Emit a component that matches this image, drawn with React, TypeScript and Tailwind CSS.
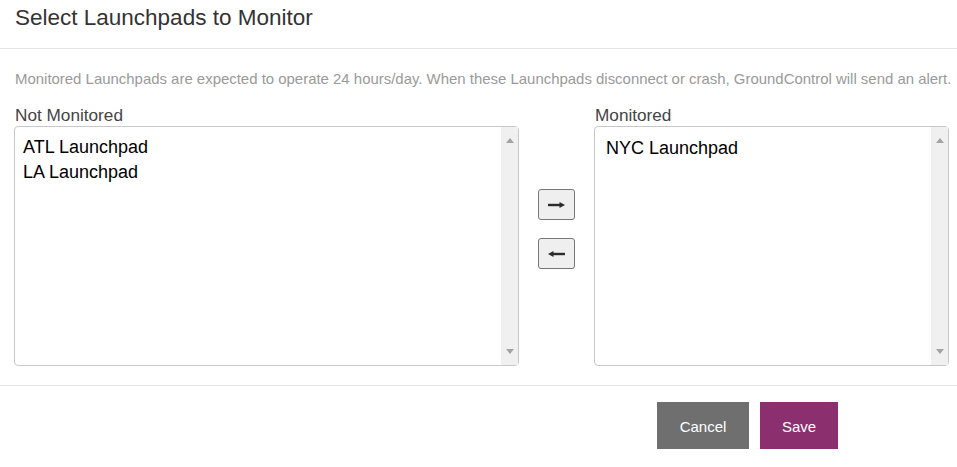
import React from "react";

const notMonitored = ["ATL Launchpad", "LA Launchpad"];
const monitored = ["NYC Launchpad"];

function FakeScrollbar() {
  return (
    <div className="flex w-[17px] flex-col items-center justify-between bg-[#f0f0f0] py-[11px]">
      <span className="h-0 w-0 border-x-[4.5px] border-b-[5px] border-x-transparent border-b-[#a3a3a3]" />
      <span className="h-0 w-0 border-x-[4.5px] border-t-[5px] border-x-transparent border-t-[#a3a3a3]" />
    </div>
  );
}

function ListBox({ items, width, padded }: { items: string[]; width: string; padded?: boolean }) {
  return (
    <div className={`flex h-[240px] ${width} rounded-[4px] border border-[#c8c8c8]`}>
      <ul
        className={`flex-1 text-[18px] leading-[25px] text-black ${
          padded ? "pl-[11px] pt-[9px]" : "pl-[8px] pt-[8px]"
        }`}
      >
        {items.map((it) => (
          <li key={it}>{it}</li>
        ))}
      </ul>
      <FakeScrollbar />
    </div>
  );
}

function ArrowButton({ dir }: { dir: "right" | "left" }) {
  return (
    <button className="flex h-[31px] w-[37px] items-center justify-center rounded-[3px] border border-[#767676] bg-[#efefef]">
      <svg width="17" height="8" viewBox="0 0 17 8">
        {dir === "right" ? (
          <>
            <rect x="0" y="2.8" width="12" height="2.4" fill="#2b2b2b" />
            <path d="M11.5 1 L17 4 L11.5 7 Z" fill="#2b2b2b" />
          </>
        ) : (
          <>
            <rect x="5" y="2.8" width="12" height="2.4" fill="#2b2b2b" />
            <path d="M5.5 1 L0 4 L5.5 7 Z" fill="#2b2b2b" />
          </>
        )}
      </svg>
    </button>
  );
}

export default function App() {
  return (
    <div className="h-[467px] w-[957px] overflow-hidden bg-white font-['Liberation_Sans',Arial,sans-serif]">
      <div className="flex h-[49px] items-start border-b border-[#e5e5e5] px-[15px] pt-[5px]">
        <h4 className="text-[22.5px] leading-[26px] text-[#333]">Select Launchpads to Monitor</h4>
      </div>

      <div className="px-[15px] pt-[21px]">
        <p className="whitespace-nowrap text-[14.95px] leading-[18px] text-[#9a9a9a]">
          Monitored Launchpads are expected to operate 24 hours/day. When these Launchpads disconnect or crash,
          GroundControl will send an alert.
        </p>

        <div className="mt-[16px] flex -ml-px">
          <div>
            <div className="pl-px text-[17.2px] leading-[22px] text-[#444]">Not Monitored</div>
            <ListBox items={notMonitored} width="w-[505px]" />
          </div>

          <div className="ml-[19px] mt-[85px] flex flex-col gap-[18px]">
            <ArrowButton dir="right" />
            <ArrowButton dir="left" />
          </div>

          <div className="ml-[19px]">
            <div className="pl-px text-[17.2px] leading-[22px] text-[#444]">Monitored</div>
            <ListBox items={monitored} width="w-[355px]" padded />
          </div>

          <div className="ml-[2px] mt-[22px] h-[240px] w-[40px] border-y border-[#c8c8c8]" />
        </div>
      </div>

      <div className="mt-[19px] flex gap-[11px] border-t border-[#e5e5e5] pl-[657px] pt-[16px]">
        <button className="h-[47px] w-[92px] bg-[#6f6f6f] pt-[3px] text-[15px] text-white">Cancel</button>
        <button className="h-[47px] w-[78px] bg-[#8b2f6f] pt-[3px] text-[15px] text-white">Save</button>
      </div>
    </div>
  );
}
